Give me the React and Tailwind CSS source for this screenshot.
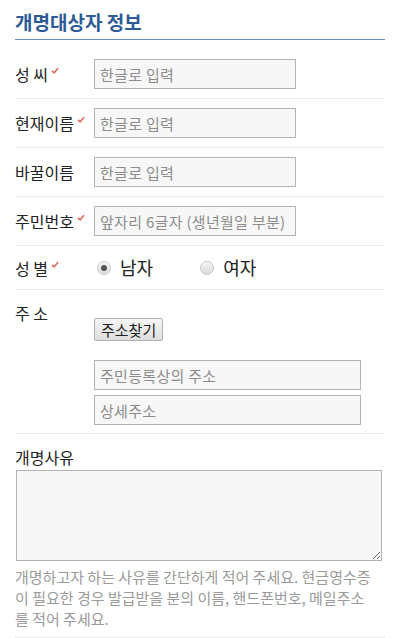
import React from "react";

const font = { fontFamily: '"Noto Sans CJK KR", "Noto Sans", sans-serif' };

function Check() {
  return (
    <svg width="8" height="7" viewBox="0 0 8 7" className="ml-[3px] -mt-[7px] inline-block">
      <path d="M1 3.8 L3.1 5.8 L7 1.2" fill="none" stroke="#e06a5e" strokeWidth="1.6" />
    </svg>
  );
}

function Label({ children, required }) {
  return (
    <div className="w-[79px] shrink-0 flex items-center text-[16px] text-[#222]">
      <span>{children}</span>
      {required && <Check />}
    </div>
  );
}

function TextInput({ placeholder, className = "w-[202px]" }) {
  return (
    <input
      placeholder={placeholder}
      className={`${className} h-[30px] border border-[#b3b3b3] bg-[#f7f7f7] px-[5px] text-[15px] tracking-[0.3px] text-[#333] placeholder:text-[#8c8c8c] outline-none`}
      style={font}
    />
  );
}

function Row({ label, required, placeholder }) {
  return (
    <div className="flex items-center py-[9px] border-b border-[#ececec]">
      <Label required={required}>{label}</Label>
      <TextInput placeholder={placeholder} />
    </div>
  );
}

function Radio({ checked, label }) {
  return (
    <label className="flex items-center">
      <span className="w-[14px] h-[14px] rounded-full border border-[#c8c8c8] bg-gradient-to-b from-[#f4f4f4] to-[#dcdcdc] flex items-center justify-center">
        {checked && <span className="w-[6px] h-[6px] rounded-full bg-[#555]" />}
      </span>
      <span className="ml-[9px] text-[18px] text-[#222]">{label}</span>
    </label>
  );
}

export default function App() {
  return (
    <div className="w-[400px] bg-white px-[15px] pt-[8px]" style={font}>
      {/* Header */}
      <div className="border-b border-[#6d8fbe] pb-[4px] mb-[10px]">
        <h2 className="text-[19px] font-bold text-[#2d5b97] leading-[27px]">개명대상자 정보</h2>
      </div>

      <Row label="성 씨" required placeholder="한글로 입력" />
      <Row label="현재이름" required placeholder="한글로 입력" />
      <Row label="바꿀이름" placeholder="한글로 입력" />
      <Row label="주민번호" required placeholder="앞자리 6글자 (생년월일 부분)" />

      {/* Gender */}
      <div className="flex items-center h-[44px] border-b border-[#ececec]">
        <Label required>성 별</Label>
        <div className="flex items-center gap-[47px] pl-[3px]">
          <Radio checked label="남자" />
          <Radio label="여자" />
        </div>
      </div>

      {/* Address */}
      <div className="flex pt-[12px] pb-[8px] border-b border-[#ececec]">
        <div className="w-[79px] shrink-0 text-[16px] text-[#222] leading-[22px]">주 소</div>
        <div className="flex flex-col">
          <button
            className="mt-[16px] self-start h-[23px] px-[6px] text-[15px] leading-[20px] text-[#222] border border-[#b0b0b0] rounded-[2px] bg-gradient-to-b from-[#f6f6f6] to-[#dedede]"
            style={font}
          >
            주소찾기
          </button>
          <div className="mt-[19px] flex flex-col gap-[5px]">
            <TextInput placeholder="주민등록상의 주소" className="w-[267px]" />
            <TextInput placeholder="상세주소" className="w-[267px]" />
          </div>
        </div>
      </div>

      {/* Reason */}
      <div className="pt-[12px] pb-[8px] border-b border-[#ececec]">
        <div className="text-[16px] text-[#222] leading-[22px]">개명사유</div>
        <textarea
          className="mt-[2px] ml-[1px] block w-[366px] h-[91px] border border-[#b3b3b3] bg-[#f7f7f7] outline-none"
          style={font}
        />
        <p className="mt-[5px] pr-[8px] text-[15px] leading-[21px] text-[#9a9a9a]">
          개명하고자 하는 사유를 간단하게 적어 주세요. 현금영수증이 필요한 경우 발급받을 분의 이름, 핸드폰번호, 메일주소를 적어 주세요.
        </p>
      </div>
    </div>
  );
}
